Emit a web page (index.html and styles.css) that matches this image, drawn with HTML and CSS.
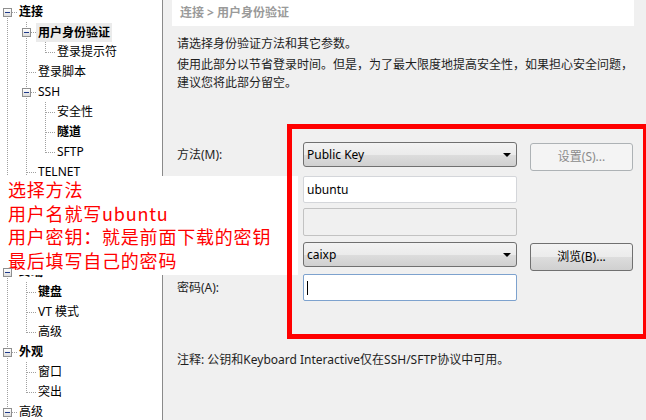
FILE: index.html
```html
<!DOCTYPE html>
<html lang="zh-CN">
<head>
<meta charset="utf-8">
<title>用户身份验证</title>
<link rel="stylesheet" href="styles.css">
</head>
<body>
<div class="window">
  <aside class="tree">
    <div class="row"><span class="g g-box g-first"><i class="box"></i></span><span class="label b">连接</span></div>
    <div class="row"><span class="g g-v"></span><span class="g g-box"><i class="box"></i></span><span class="label b sel">用户身份验证</span></div>
    <div class="row"><span class="g g-v"></span><span class="g g-v"></span><span class="g g-l"></span><span class="label">登录提示符</span></div>
    <div class="row"><span class="g g-v"></span><span class="g g-t"></span><span class="label">登录脚本</span></div>
    <div class="row"><span class="g g-v"></span><span class="g g-box"><i class="box"></i></span><span class="label">SSH</span></div>
    <div class="row"><span class="g g-v"></span><span class="g g-v"></span><span class="g g-t"></span><span class="label">安全性</span></div>
    <div class="row"><span class="g g-v"></span><span class="g g-v"></span><span class="g g-t"></span><span class="label b">隧道</span></div>
    <div class="row"><span class="g g-v"></span><span class="g g-v"></span><span class="g g-l"></span><span class="label">SFTP</span></div>
    <div class="row"><span class="g g-v"></span><span class="g g-t"></span><span class="label">TELNET</span></div>
    <div class="row"><span class="g g-v"></span><span class="g g-t"></span></div>
    <div class="row"><span class="g g-v"></span><span class="g g-t"></span></div>
    <div class="row"><span class="g g-v"></span><span class="g g-t"></span></div>
    <div class="row"><span class="g g-v"></span><span class="g g-l"></span></div>
    <div class="row"><span class="g g-box"><i class="box"></i></span><span class="label b">终端</span></div>
    <div class="row"><span class="g g-v"></span><span class="g g-t"></span><span class="label b">键盘</span></div>
    <div class="row"><span class="g g-v"></span><span class="g g-t"></span><span class="label">VT 模式</span></div>
    <div class="row"><span class="g g-v"></span><span class="g g-l"></span><span class="label">高级</span></div>
    <div class="row"><span class="g g-box"><i class="box"></i></span><span class="label b">外观</span></div>
    <div class="row"><span class="g g-v"></span><span class="g g-t"></span><span class="label">窗口</span></div>
    <div class="row"><span class="g g-v"></span><span class="g g-l"></span><span class="label">突出</span></div>
    <div class="row"><span class="g g-box"><i class="box"></i></span><span class="label">高级</span></div>
  </aside>
  <main class="panel">
    <div class="crumb">连接 &gt; 用户身份验证</div>
    <div class="content">
      <p class="intro">请选择身份验证方法和其它参数。</p>
      <p class="desc">使用此部分以节省登录时间。但是，为了最大限度地提高安全性，如果担心安全问题，建议您将此部分留空。</p>
      <div class="form">
        <div class="lbl">方法(M):</div>
        <div class="select"><span>Public Key</span><i class="arrow"></i></div>
        <div class="btn disabled">设置(S)...</div>

        <div class="lbl lbl-in"></div>
        <div class="input">ubuntu</div>
        <div></div>

        <div class="lbl lbl-in"></div>
        <div class="input input-disabled"></div>
        <div></div>

        <div class="lbl"></div>
        <div class="select"><span>caixp</span><i class="arrow"></i></div>
        <div class="btn">浏览(B)...</div>

        <div class="lbl lbl-in">密码(A):</div>
        <div class="input input-focus"><i class="caret"></i></div>
        <div></div>
      </div>
      <p class="note">注释: 公钥和Keyboard Interactive仅在SSH/SFTP协议中可用。</p>
    </div>
  </main>
</div>
<div class="callout">选择方法<br>用户名就写ubuntu<br>用户密钥：就是前面下载的密钥<br>最后填写自己的密码</div>
<div class="redbox"></div>
</body>
</html>
```
FILE: styles.css
```css
* { box-sizing: border-box; }
html, body {
  margin: 0;
  padding: 0;
}
body {
  width: 646px;
  height: 420px;
  overflow: hidden;
  position: relative;
  font-family: "Noto Sans", "Noto Sans CJK SC", sans-serif;
  font-size: 12px;
  color: #1e1e1e;
  background: #f0f0f0;
}
.window {
  display: flex;
  height: 420px;
}
.tree {
  width: 163px;
  flex: none;
  background: #fff;
  border-right: 1px solid #8a8a8a;
  padding-top: 2px;
}
.row {
  display: flex;
  height: 20px;
  align-items: flex-start;
}
.g {
  width: 19px;
  height: 20px;
  flex: none;
  position: relative;
}
.g-v::before, .g-t::before, .g-l::before, .g-box::before {
  content: "";
  position: absolute;
  left: 7px;
  top: 0;
  width: 1px;
  height: 20px;
  background: repeating-linear-gradient(to bottom, #a0a0a0 0 1px, transparent 1px 2px);
}
.g-l::before { height: 11px; }
.g-first::before { top: 10px; height: 10px; }
.g-t::after, .g-l::after, .g-box::after {
  content: "";
  position: absolute;
  left: 8px;
  top: 10px;
  width: 10px;
  height: 1px;
  background: repeating-linear-gradient(to right, #a0a0a0 0 1px, transparent 1px 2px);
}
.g-box::after { left: 12px; width: 6px; }
.box {
  position: absolute;
  left: 3px;
  top: 6px;
  width: 9px;
  height: 9px;
  border: 1px solid #8f8f8f;
  background: linear-gradient(#ffffff, #dcdcdc);
  z-index: 1;
}
.box::after {
  content: "";
  position: absolute;
  left: 1px;
  top: 3px;
  width: 5px;
  height: 1px;
  background: #1f3a8a;
}
.label {
  margin: 1px 0 0 -2px;
  padding: 0 2px;
  line-height: 18px;
  white-space: nowrap;
  color: #000;
}
.label.b { font-weight: bold; }
.label.sel { background: #ebebeb; line-height: 19px; }

.panel {
  flex: 1;
  background: #f0f0f0;
}
.crumb {
  margin-left: 9px;
  width: 462px;
  height: 26px;
  line-height: 26px;
  background: #fff;
  padding-left: 8px;
  color: #9a9a9a;
  font-weight: bold;
}
.content {
  padding-left: 14px;
}
.intro {
  margin: 9px 0 0;
  line-height: 18px;
}
.desc {
  margin: 3px 0 0;
  width: 460px;
  line-height: 18px;
}
.form {
  margin-top: 50px;
  display: grid;
  grid-template-columns: 113px 214px 103px;
  grid-template-rows: 34px 32px 34px 32px 28px;
  column-gap: 13px;
  align-items: start;
}
.lbl {
  line-height: 25px;
  min-height: 25px;
  white-space: nowrap;
}
.lbl-in { line-height: 27px; }
.select {
  height: 25px;
  border: 1px solid #707070;
  border-radius: 3px;
  background: linear-gradient(#f3f3f3 0%, #ebebeb 50%, #dddddd 50%, #d0d0d0 100%);
  display: flex;
  align-items: center;
  justify-content: space-between;
  padding: 0 5px 0 3px;
  color: #000;
}
.arrow {
  width: 0;
  height: 0;
  border-left: 4px solid transparent;
  border-right: 4px solid transparent;
  border-top: 4px solid #000;
}
.input {
  height: 27px;
  border: 1px solid #d4d6da;
  border-radius: 2px;
  background: #fff;
  padding-left: 3px;
  line-height: 25px;
  color: #000;
  display: flex;
  align-items: center;
}
.input-disabled {
  height: 28px;
  background: #f0f0f0;
  border-color: #c2c2c2;
}
.input-focus {
  border-color: #7da2ce;
}
.caret {
  width: 1px;
  height: 14px;
  background: #000;
}
.btn {
  margin-top: 1px;
  height: 28px;
  border: 1px solid #707070;
  border-radius: 3px;
  background: linear-gradient(#f3f3f3 0%, #ebebeb 50%, #dddddd 50%, #d0d0d0 100%);
  text-align: center;
  line-height: 26px;
  color: #000;
}
.btn.disabled {
  border-color: #adb2b5;
  background: #f4f4f4;
  color: #8b8b8b;
}
.note {
  margin: 49px 0 0;
  line-height: 18px;
}
.callout {
  position: absolute;
  left: 0;
  top: 176px;
  width: 298px;
  height: 99px;
  background: #fff;
  padding: 2px 0 0 8px;
  color: #ff0000;
  font-family: "Noto Sans CJK SC", sans-serif;
  font-size: 18px;
  letter-spacing: 0.8px;
  line-height: 23.5px;
  white-space: nowrap;
}
.redbox {
  position: absolute;
  left: 287px;
  top: 124px;
  width: 361px;
  height: 215px;
  border: 5px solid #ff0000;
}
```
